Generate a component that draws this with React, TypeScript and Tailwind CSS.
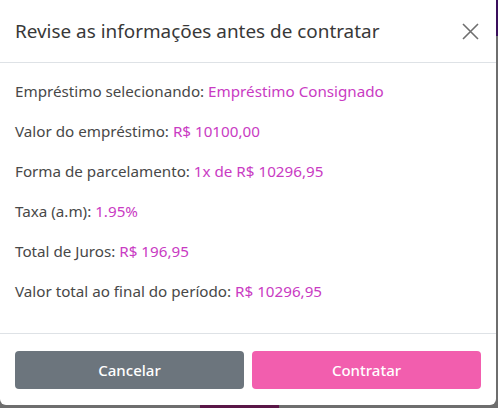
const rows = [
  { label: "Empréstimo selecionando:", value: "Empréstimo Consignado" },
  { label: "Valor do empréstimo:", value: "R$ 10100,00" },
  { label: "Forma de parcelamento:", value: "1x de R$ 10296,95" },
  { label: "Taxa (a.m):", value: "1.95%" },
  { label: "Total de Juros:", value: "R$ 196,95" },
  { label: "Valor total ao final do período:", value: "R$ 10296,95" },
];

export default function App() {
  return (
    <div
      className="relative h-[408px] w-[498px] overflow-hidden bg-[#6e6e6e]"
      style={{ fontFamily: "'Noto Sans', Lato, sans-serif" }}
    >
      {/* pedaços da página atrás do overlay */}
      <div className="absolute right-0 top-0 h-[36px] w-[2px] bg-[#3a0f5c]" />
      <div className="absolute bottom-0 left-[200px] h-[3px] w-[79px] bg-[#5a1747]" />

      <div className="relative flex h-[405px] w-[496px] flex-col rounded-b-md bg-white">
        <div className="flex h-[63px] items-center justify-between border-b border-[#dee2e6] pl-[15px] pr-[16px]">
          <h2 className="text-[18.9px] text-[#383838]">Revise as informações antes de contratar</h2>
          <button className="flex h-[20px] w-[20px] items-center justify-center text-[#6f6f6f]">
            <svg width="17" height="17" viewBox="0 0 17 17" fill="none" stroke="currentColor" strokeWidth="1.6">
              <path d="M1 1L16 16M16 1L1 16" />
            </svg>
          </button>
        </div>

        <div className="border-b border-[#dee2e6] px-[15px] pb-[22px] pt-[8px]">
          {rows.map((row) => (
            <div key={row.label} className="flex h-[40px] items-center text-[15.2px] text-[#484848]">
              <span>
                {row.label} <span className="text-[#c93bc3]">{row.value}</span>
              </span>
            </div>
          ))}
        </div>

        <div className="flex gap-2 px-[15px] pt-[17px]">
          <button className="h-[38px] flex-1 rounded bg-[#6c757d] text-[15px] font-medium text-white">Cancelar</button>
          <button className="h-[38px] flex-1 rounded bg-[#f25eae] text-[15px] font-medium text-white">Contratar</button>
        </div>
      </div>
    </div>
  );
}
